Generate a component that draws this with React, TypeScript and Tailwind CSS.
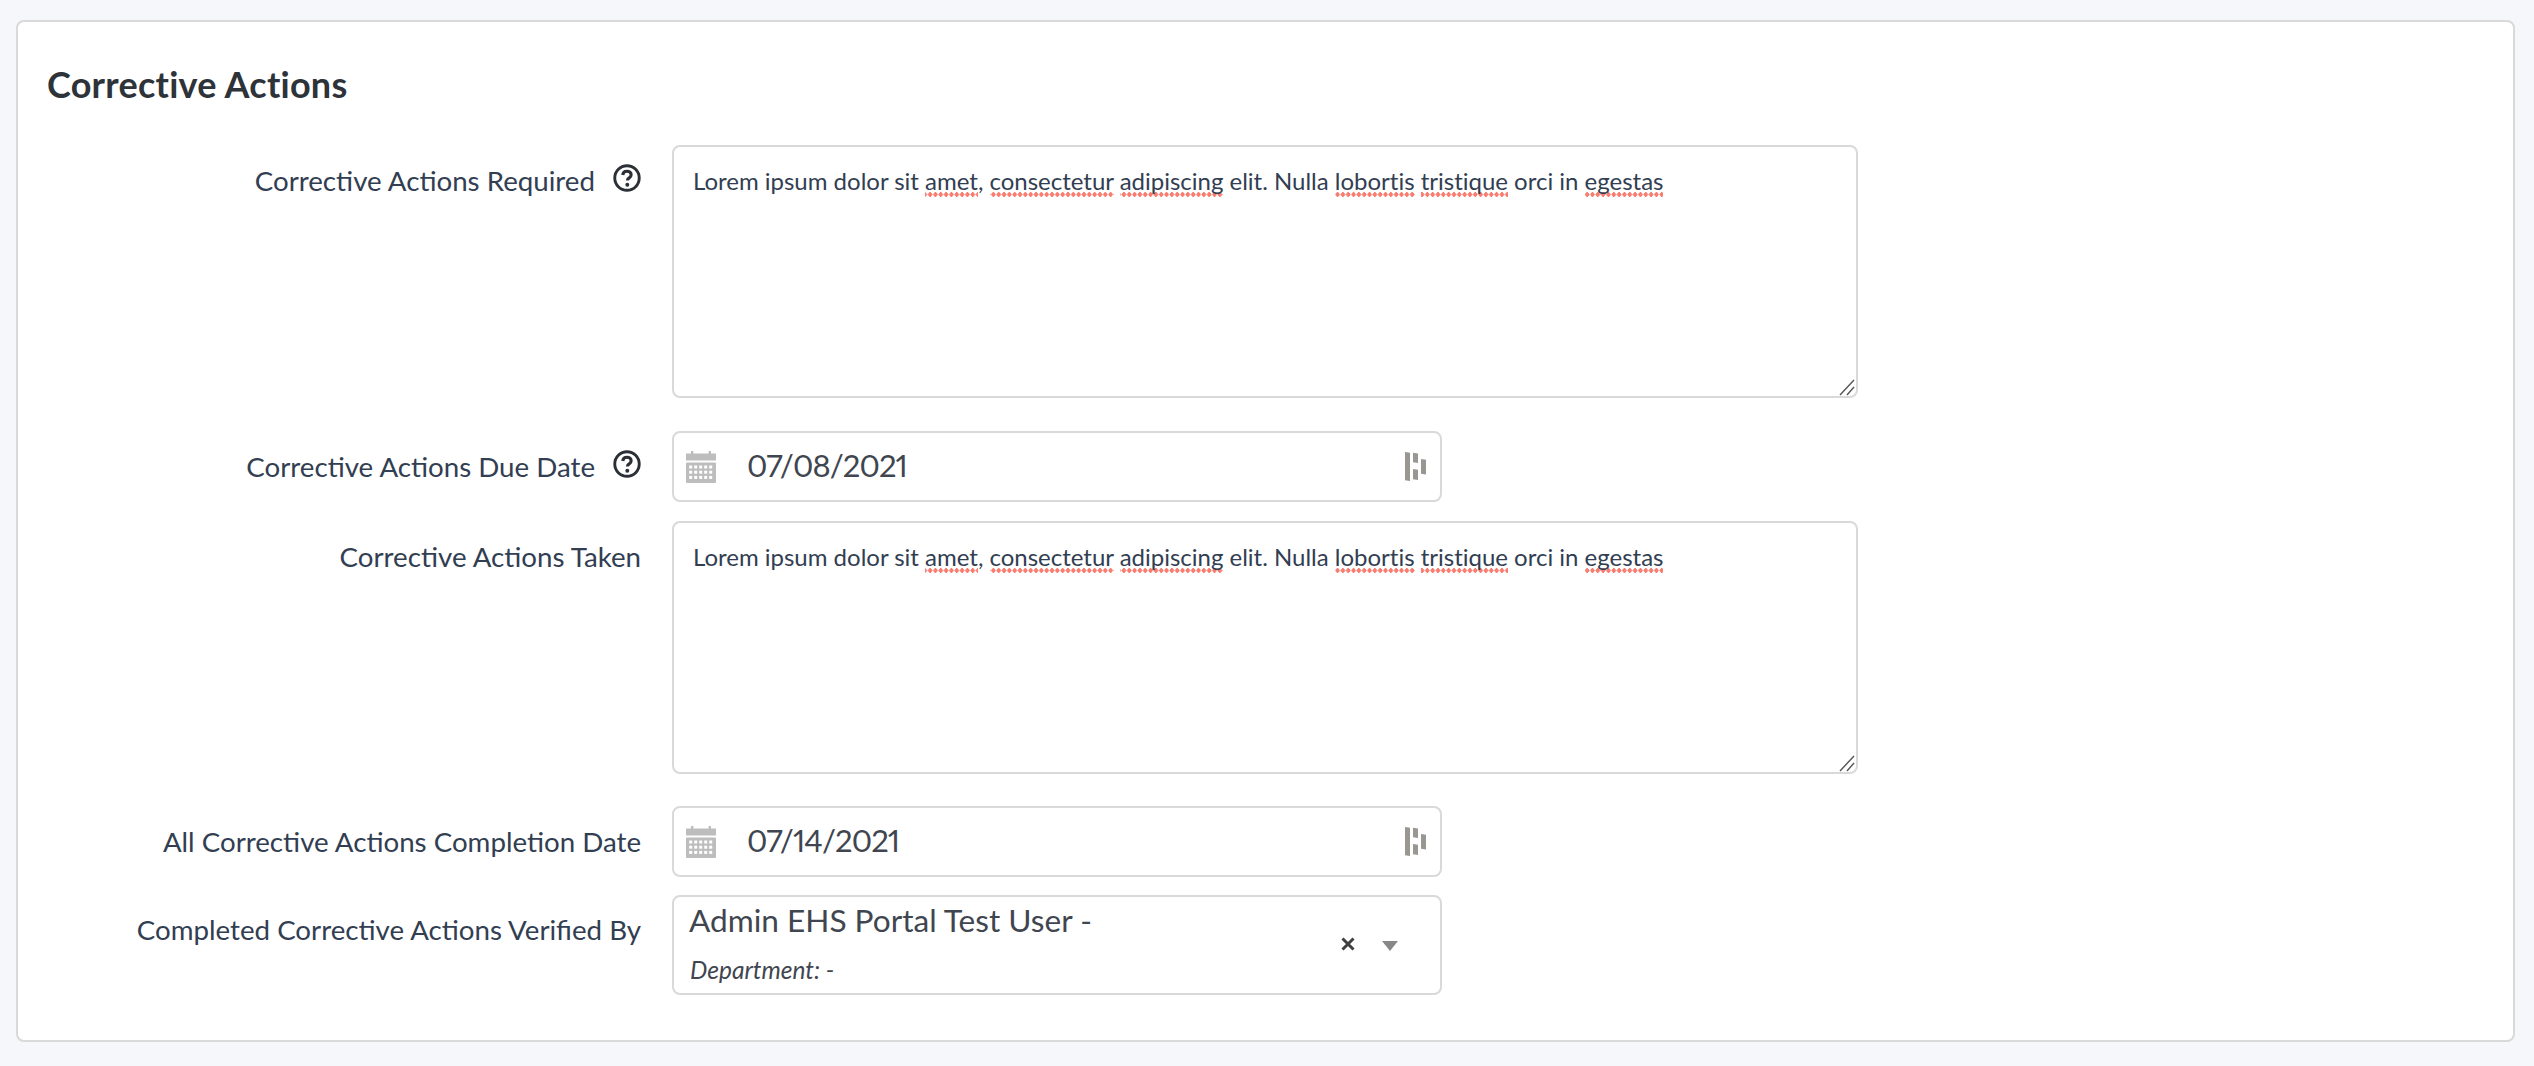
import React from "react";

const dots =
  "bg-[radial-gradient(circle,#f87e72_2.1px,transparent_2.4px)] bg-[length:5.33px_5px] bg-repeat-x bg-bottom pb-[1.5px]";

function Sp({ children }: { children: React.ReactNode }) {
  return <span className={dots}>{children}</span>;
}

function Help() {
  return (
    <svg width="28" height="28" viewBox="0 0 27 27" className="shrink-0" fill="none">
      <circle cx="13.5" cy="13.5" r="11.8" stroke="#2b3036" strokeWidth="2.8" />
      <path d="M9.4 10.6c.2-2.3 1.9-3.6 4.1-3.6 2.4 0 4 1.4 4 3.3 0 1.5-.8 2.3-1.9 3.1-1.1.7-1.7 1.3-1.7 2.6" stroke="#2b3036" strokeWidth="3" />
      <circle cx="13.8" cy="20" r="1.9" fill="#2b3036" />
    </svg>
  );
}

function Calendar() {
  const cells: React.ReactElement[] = [];
  for (let r = 0; r < 3; r++)
    for (let c = 0; c < 5; c++)
      cells.push(<rect key={`${r}-${c}`} x={3.2 + c * 5} y={14.5 + r * 5.2} width="3" height="3" fill="#fff" />);
  return (
    <svg width="30" height="32" viewBox="0 0 30 32" className="shrink-0">
      <rect x="5" y="0" width="2.4" height="4" fill="#bdbdbd" />
      <rect x="22.6" y="0" width="2.4" height="4" fill="#bdbdbd" />
      <rect x="0" y="2.5" width="30" height="7" fill="#bdbdbd" />
      <rect x="0" y="11.5" width="30" height="20.5" rx="1" fill="#bdbdbd" />
      {cells}
    </svg>
  );
}

function Dash() {
  return (
    <svg width="21" height="29" viewBox="0 0 21 29" className="shrink-0">
      <path d="M0 0l5 .7V29l-5-.7z" fill="#9a9692" />
      <path d="M8 .7l5 .8v9.5l-5-.8zM8 17l5 .8V28l-5-.8z" fill="#9a9692" />
      <path d="M16 7l5 .8v14.7l-5-.8z" fill="#9a9692" />
    </svg>
  );
}

function Label({ text, help, className }: { text: string; help?: boolean; className: string }) {
  return (
    <div className={`flex justify-end items-start gap-[18px] text-[27.7px] leading-[34px] text-[#323e52] ${className}`}>
      <span>{text}</span>
      {help ? <Help /> : null}
    </div>
  );
}

function TextBox() {
  return (
    <div className="relative h-[253px] w-[1186px] rounded-[8px] border-2 border-[#d9d9d9] bg-white pl-[19px] pt-[17px] text-[24px] leading-[34px] tracking-[-0.01px] text-[#323e52]">
      Lorem ipsum dolor sit <Sp>amet</Sp>, <Sp>consectetur</Sp> <Sp>adipiscing</Sp> elit. Nulla <Sp>lobortis</Sp>{" "}
      <Sp>tristique</Sp> orci in <Sp>egestas</Sp>
      <svg width="18" height="18" viewBox="0 0 18 18" className="absolute bottom-0 right-0" stroke="#555" strokeWidth="1.4">
        <path d="M2 17L16 2M9 17L16 9" />
      </svg>
    </div>
  );
}

function DateBox({ value }: { value: string }) {
  return (
    <div className="flex h-[71px] w-[770px] items-center rounded-[8px] border-2 border-[#d9d9d9] bg-white pl-[12px] pr-[14px]">
      <Calendar />
      <span className="ml-[31px] -mt-[2px] flex-1 text-[31px] tracking-[-0.9px] text-[#3f4650] proportional-nums">{value}</span>
      <Dash />
    </div>
  );
}

export default function App() {
  return (
    <div className="h-[1066px] w-full overflow-hidden bg-[#f5f7fb] pb-[24px] pl-[16px] pr-[19px] pt-[20px] font-[Lato,sans-serif]">
      <div className="h-[1022px] rounded-[8px] border-2 border-[#d9d9d9] bg-white">
        <h2 className="pl-[29px] pt-[42px] text-[36px] font-bold leading-[40px] tracking-[0.25px] text-[#2d3338]">Corrective Actions</h2>
        <div className="mt-[41px] grid grid-cols-[623px_auto] justify-start gap-x-[31px]">
          <Label text="Corrective Actions Required" help className="pt-[19px]" />
          <TextBox />

          <Label text="Corrective Actions Due Date" help className="mt-[33px] pt-[19px]" />
          <div className="mt-[33px]">
            <DateBox value="07/08/2021" />
          </div>

          <Label text="Corrective Actions Taken" className="mt-[19px] pt-[19px]" />
          <div className="mt-[19px]">
            <TextBox />
          </div>

          <Label text="All Corrective Actions Completion Date" className="mt-[32px] pt-[19px]" />
          <div className="mt-[32px]">
            <DateBox value="07/14/2021" />
          </div>

          <Label text="Completed Corrective Actions Verified By" className="mt-[18px] pt-[18px]" />
          <div className="mt-[18px]">
            <div className="relative h-[100px] w-[770px] rounded-[8px] border-2 border-[#d9d9d9] bg-white pl-[15px] pt-[3px]">
              <div className="text-[31.6px] leading-[40px] text-[#3f4650]">Admin EHS Portal Test User -</div>
              <div className="mt-[15px] pl-[1px] text-[24.5px] italic leading-[30px] text-[#3f4650]">Department: -</div>
              <svg width="14" height="14" viewBox="0 0 14 14" className="absolute left-[667px] top-[40px]" stroke="#3f3f3f" strokeWidth="3">
                <path d="M1.5 1.5l11 11M12.5 1.5l-11 11" />
              </svg>
              <svg width="16" height="10" viewBox="0 0 16 10" className="absolute left-[708px] top-[44px]">
                <path d="M0 0h16l-8 10z" fill="#888" />
              </svg>
            </div>
          </div>
        </div>
      </div>
    </div>
  );
}
